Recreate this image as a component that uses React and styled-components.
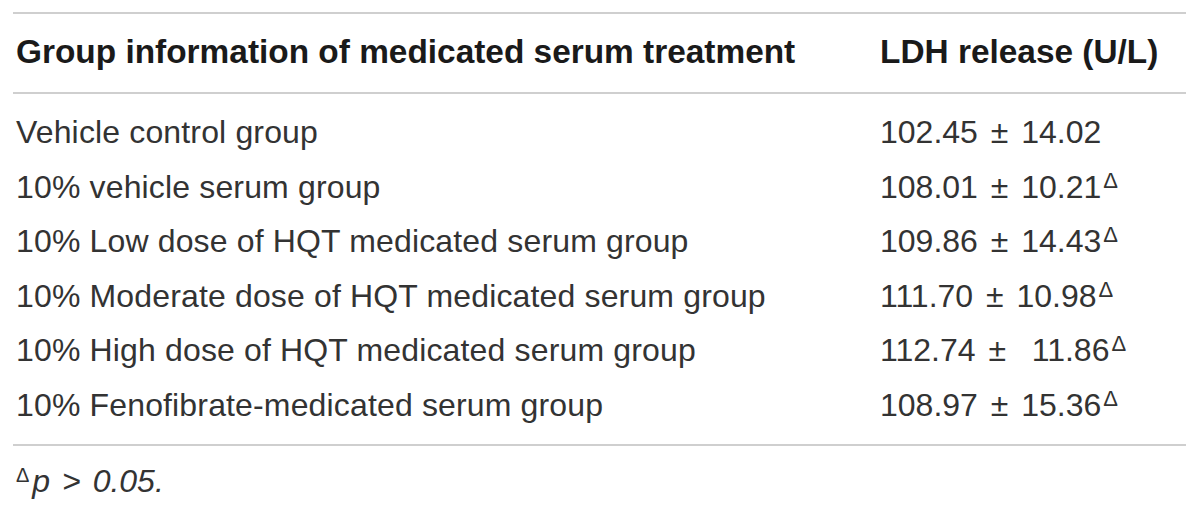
import React from 'react';
import styled, { createGlobalStyle } from 'styled-components';

const GlobalStyle = createGlobalStyle`
  html, body {
    margin: 0;
    padding: 0;
    background: #fff;
  }
  body {
    font-family: "Liberation Sans", Arial, sans-serif;
    color: #231f20;
  }
`;

const Page = styled.div`
  width: 1200px;
  height: 512px;
  padding: 12px 14px 0 13px;
  box-sizing: border-box;
  background: #fff;
`;

const Table = styled.div`
  display: grid;
  grid-template-columns: 864px 1fr;
  border-top: 2px solid #cfcfcf;
  border-bottom: 2px solid #cfcfcf;
`;

const HeadCell = styled.div`
  font-weight: 700;
  font-size: 33.4px;
  line-height: 40px;
  color: #1a1a1a;
  padding: 18px 0 20px 3px;
  border-bottom: 2px solid #cfcfcf;
  white-space: nowrap;
`;

const Body = styled.div`
  grid-column: 1 / -1;
  display: grid;
  grid-template-columns: 864px 1fr;
  padding: 11px 0 12px;
`;

const Cell = styled.div`
  font-size: 32px;
  line-height: 54.5px;
  font-weight: 400;
  color: #333;
  padding-left: 3px;
  white-space: pre;
  letter-spacing: ${({ $value }) => ($value ? '0' : '0.15px')};
  word-spacing: ${({ $value }) => ($value ? '4px' : '0')};
`;

const Mark = styled.sup`
  font-size: 22px;
  font-weight: 300;
  line-height: 0;
  vertical-align: baseline;
  position: relative;
  top: -10px;
  margin-left: 2px;
`;

const Note = styled.div`
  font-size: 32px;
  line-height: 40px;
  color: #333;
  padding: 15px 0 0 3px;
`;

const NoteMark = styled.span`
  font-size: 20px;
  position: relative;
  top: -10px;
  margin-right: 3px;
`;

const Italic = styled.em`
  font-style: italic;
  word-spacing: 3px;
`;

const rows = [
  ['Vehicle control group', '102.45 \u00b1 14.02', false],
  ['10% vehicle serum group', '108.01 \u00b1 10.21', true],
  ['10% Low dose of HQT medicated serum group', '109.86 \u00b1 14.43', true],
  ['10% Moderate dose of HQT medicated serum group', '111.70 \u00b1 10.98', true],
  ['10% High dose of HQT medicated serum group', '112.74 \u00b1  11.86', true],
  ['10% Fenofibrate-medicated serum group', '108.97 \u00b1 15.36', true],
];

export default function App() {
  return (
    <Page>
      <GlobalStyle />
      <Table>
        <HeadCell>Group information of medicated serum treatment</HeadCell>
        <HeadCell>LDH release (U/L)</HeadCell>
        <Body>
          {rows.map(([group, value, marked]) => (
            <React.Fragment key={group}>
              <Cell>{group}</Cell>
              <Cell $value>
                {value}
                {marked && <Mark>{'\u0394'}</Mark>}
              </Cell>
            </React.Fragment>
          ))}
        </Body>
      </Table>
      <Note>
        <NoteMark>{'\u0394'}</NoteMark>
        <Italic>p &gt; 0.05.</Italic>
      </Note>
    </Page>
  );
}
